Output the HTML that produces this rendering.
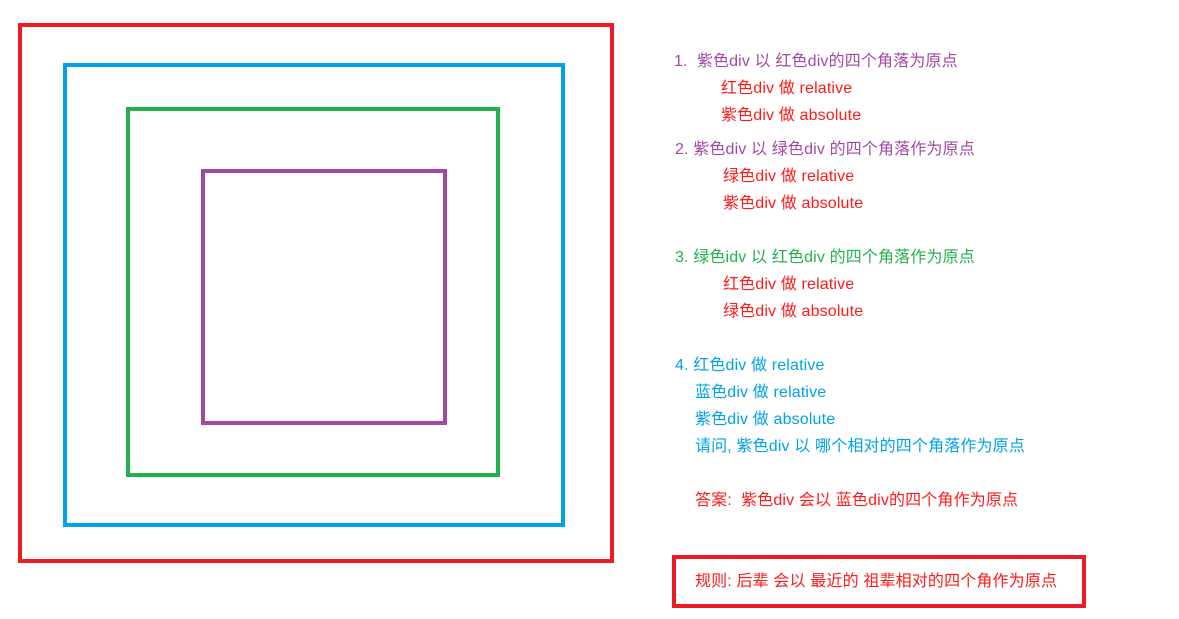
<!DOCTYPE html>
<html><head><meta charset="utf-8"><style>
body{margin:0;width:1179px;height:619px;background:#fff;position:relative;overflow:hidden;font-family:"Liberation Sans","Noto Sans CJK SC",sans-serif;font-size:16px}
.b{position:absolute;box-sizing:border-box;border:4px solid}
.t{position:absolute;white-space:nowrap;line-height:20px;letter-spacing:0.15px}
.p{color:#a349a4}.r{color:#ff1a1a}.g{color:#22b14c}.u{color:#00a2e8}
</style></head><body>
<div class="b" style="left:18px;top:23px;width:596px;height:540px;border-color:#ed1c24"></div>
<div class="b" style="left:63px;top:63px;width:502px;height:464px;border-color:#00a2e8"></div>
<div class="b" style="left:126px;top:107px;width:374px;height:370px;border-color:#22b14c"></div>
<div class="b" style="left:201px;top:169px;width:246px;height:256px;border-color:#a349a4"></div>
<div class="b" style="left:672px;top:555px;width:414px;height:53px;border-color:#ed1c24"></div>

<div class="t p" style="left:674px;top:52px">1.&nbsp; 紫色div 以 红色div的四个角落为原点</div>
<div class="t r" style="left:721px;top:79px">红色div 做 relative</div>
<div class="t r" style="left:721px;top:106px">紫色div 做 absolute</div>
<div class="t p" style="left:675px;top:140px">2. 紫色div 以 绿色div 的四个角落作为原点</div>
<div class="t r" style="left:723px;top:167px">绿色div 做 relative</div>
<div class="t r" style="left:723px;top:194px">紫色div 做 absolute</div>
<div class="t g" style="left:675px;top:248px">3. 绿色idv 以 红色div 的四个角落作为原点</div>
<div class="t r" style="left:723px;top:275px">红色div 做 relative</div>
<div class="t r" style="left:723px;top:302px">绿色div 做 absolute</div>
<div class="t u" style="left:675px;top:356px">4. 红色div 做 relative</div>
<div class="t u" style="left:695px;top:383px">蓝色div 做 relative</div>
<div class="t u" style="left:695px;top:410px">紫色div 做 absolute</div>
<div class="t u" style="left:695px;top:437px">请问, 紫色div 以 哪个相对的四个角落作为原点</div>
<div class="t r" style="left:695px;top:491px">答案:&nbsp; 紫色div 会以 蓝色div的四个角作为原点</div>
<div class="t r" style="left:695px;top:572px">规则: 后辈 会以 最近的 祖辈相对的四个角作为原点</div>
</body></html>
